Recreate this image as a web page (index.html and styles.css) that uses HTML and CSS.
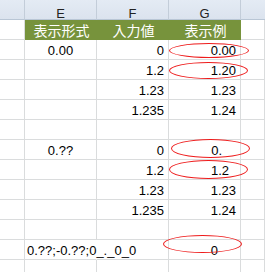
FILE: index.html
```html
<!DOCTYPE html>
<html lang="ja">
<head>
<meta charset="utf-8">
<link rel="stylesheet" href="styles.css">
</head>
<body>
<div class="sheet">
  <div class="grid">
    <div class="c hd"></div><div class="c hd">E</div><div class="c hd">F</div><div class="c hd">G</div><div class="c hd last"></div>

    <div class="c"></div><div class="c gr">表示形式</div><div class="c gr">入力値</div><div class="c gr gl">表示例</div><div class="c"></div>

    <div class="c"></div><div class="c ctr">0.00</div><div class="c num">0</div><div class="c num">0.00</div><div class="c"></div>
    <div class="c"></div><div class="c"></div><div class="c num">1.2</div><div class="c num">1.20</div><div class="c"></div>
    <div class="c"></div><div class="c"></div><div class="c num">1.23</div><div class="c num">1.23</div><div class="c"></div>
    <div class="c"></div><div class="c"></div><div class="c num">1.235</div><div class="c num">1.24</div><div class="c"></div>
    <div class="c"></div><div class="c"></div><div class="c"></div><div class="c"></div><div class="c"></div>

    <div class="c"></div><div class="c ctr">0.??</div><div class="c num">0</div><div class="c num"><span class="sp2">0.</span></div><div class="c"></div>
    <div class="c"></div><div class="c"></div><div class="c num">1.2</div><div class="c num"><span class="sp1">1.2</span></div><div class="c"></div>
    <div class="c"></div><div class="c"></div><div class="c num">1.23</div><div class="c num">1.23</div><div class="c"></div>
    <div class="c"></div><div class="c"></div><div class="c num">1.235</div><div class="c num">1.24</div><div class="c"></div>
    <div class="c"></div><div class="c"></div><div class="c"></div><div class="c"></div><div class="c"></div>

    <div class="c"></div><div class="c spill">0.??;-0.??;0_._0_0</div><div class="c"></div><div class="c num"><span class="sp3">0</span></div><div class="c"></div>
    <div class="c"></div><div class="c"></div><div class="c"></div><div class="c"></div><div class="c"></div>
  </div>

  <div class="oval o1"></div>
  <div class="oval o2"></div>
  <div class="oval o6"></div>
  <div class="oval o7"></div>
  <div class="oval o11"></div>
</div>
</body>
</html>
```

FILE: styles.css
```css
html, body {
  margin: 0;
  padding: 0;
  background: #ffffff;
  overflow: hidden;
}

.sheet {
  position: relative;
  width: 265px;
  height: 272px;
  overflow: hidden;
  font-family: "Liberation Sans", Arial, sans-serif;
  font-size: 13px;
  color: #000000;
}

.grid {
  display: grid;
  grid-template-columns: 25px 72px 72px 72px 24px;
  grid-auto-rows: 20px;
}

.c {
  box-sizing: border-box;
  border-right: 1px solid #dadcdd;
  border-bottom: 1px solid #dadcdd;
  line-height: 19px;
  padding-top: 1px;
  white-space: nowrap;
}

.hd {
  background: linear-gradient(#e4ebf4, #dbe3ee);
  border-right-color: #c3cdd9;
  border-bottom-color: #b9c6d5;
  text-align: center;
  padding-top: 6px;
  line-height: 15px;
  color: #222222;
}

.hd.last {
  border-right: none;
}

.gr {
  background: #77933c;
  border-right: none;
  border-bottom: none;
  color: #ffffff;
  text-align: center;
  font-family: "Noto Sans CJK JP", sans-serif;
  font-size: 14px;
  line-height: 19px;
  padding-top: 1px;
  padding-left: 1px;
}

.ctr {
  text-align: center;
}

.num {
  text-align: right;
  padding-right: 4px;
}

.spill {
  border-right-color: transparent;
  padding-left: 2px;
  overflow: visible;
}

.sp1 { padding-right: 7px; }
.sp2 { padding-right: 14px; }
.sp3 { padding-right: 18px; }

.oval {
  position: absolute;
  box-sizing: border-box;
  border: 1.5px solid #ee1c1c;
  border-radius: 50%;
}

.o1  { left: 169px; top: 43px;  width: 80px; height: 15px; }
.o2  { left: 169px; top: 62px;  width: 79px; height: 17px; }
.o6  { left: 171px; top: 139px; width: 79px; height: 19px; }
.o7  { left: 169px; top: 160px; width: 79px; height: 19px; }
.o11 { left: 163px; top: 235px; width: 79px; height: 18px; }
```
